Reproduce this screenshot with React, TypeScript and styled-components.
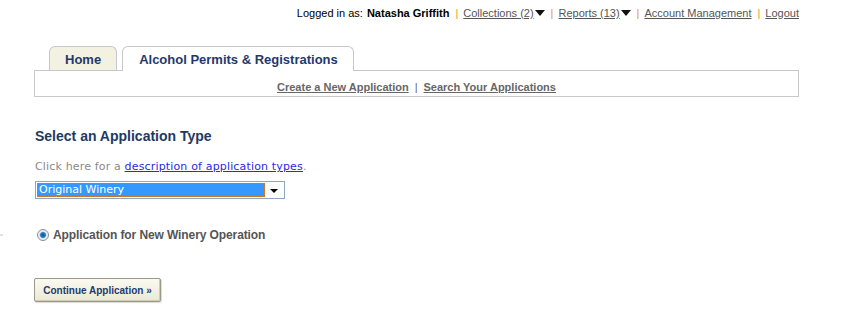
import styled, { createGlobalStyle } from "styled-components";

const GlobalStyle = createGlobalStyle`
  html, body {
    margin: 0;
    padding: 0;
    background: #fff;
    font-family: "Liberation Sans", Arial, sans-serif;
  }
`;

const Page = styled.div`
  width: 850px;
  height: 316px;
  overflow: hidden;
  box-sizing: border-box;
  padding: 0 51px 0 34px;
`;

const TopBar = styled.div`
  display: flex;
  justify-content: flex-end;
  align-items: center;
  height: 14px;
  padding-top: 6px;
  font-size: 11px;
  color: #000;
  white-space: nowrap;
`;

const UserName = styled.b`
  margin-left: 4px;
`;

const Pipe = styled.span`
  color: #e39a2b;
  margin: 0 5px 0 6px;
`;

const TopLink = styled.a`
  color: #555;
  text-decoration: underline;
`;

const Caret = styled.span`
  display: inline-block;
  width: 0;
  height: 0;
  border-left: 5px solid transparent;
  border-right: 5px solid transparent;
  border-top: 6px solid #111;
  margin-left: 1px;
  vertical-align: 2px;
`;

const TabList = styled.div`
  display: flex;
  align-items: flex-end;
  gap: 5px;
  padding-left: 15px;
  margin-top: 26px;
`;

const Tab = styled.div<{ $active?: boolean }>`
  box-sizing: border-box;
  height: ${p => (p.$active ? 25 : 24)}px;
  margin-bottom: ${p => (p.$active ? -1 : 0)}px;
  position: relative;
  z-index: ${p => (p.$active ? 1 : 0)};
  padding: ${p => (p.$active ? "4px 15px 0 16px" : "4px 15px 0 15px")};
  background: ${p => (p.$active ? "#fff" : "#f3f1e2")};
  border: 1px solid #c8c8c8;
  border-bottom: none;
  border-radius: 6px 6px 0 0;
  color: #1e3a6b;
  font-weight: bold;
  font-size: 13px;
  line-height: 17px;
`;

const SubNav = styled.div`
  box-sizing: border-box;
  height: 27px;
  border: 1px solid #c8c8c8;
  display: flex;
  justify-content: center;
  align-items: flex-end;
  padding-bottom: 3px;
  font-size: 11px;
  font-weight: bold;
  color: #666;
`;

const SubLink = styled.a`
  color: #666;
  text-decoration: underline;
`;

const SubPipe = styled.span`
  margin: 0 6px;
  font-weight: normal;
  color: #666;
`;

const Heading = styled.h2`
  margin: 31px 0 0 1px;
  font-size: 14px;
  line-height: 16px;
  color: #1e3a63;
`;

const Hint = styled.p`
  margin: 16px 0 0 1px;
  font-family: "DejaVu Sans", Verdana, sans-serif;
  font-size: 11px;
  letter-spacing: 0.16px;
  line-height: 14px;
  color: #8a8a8a;
`;

const HintLink = styled.a`
  color: #2a2ae0;
  text-decoration: underline;
`;

const FakeSelect = styled.div`
  box-sizing: border-box;
  width: 250px;
  height: 18px;
  margin: 7px 0 0 1px;
  border: 1px solid #8ea6c2;
  display: flex;
  align-items: center;
  padding: 1px;
  background: #fff;
`;

const SelectedValue = styled.div`
  box-sizing: border-box;
  flex: 1;
  height: 14px;
  background: #3399ff;
  outline: 1px dotted #d07a2a;
  outline-offset: -1px;
  color: #fff;
  font-family: "DejaVu Sans", Verdana, sans-serif;
  font-size: 11px;
  line-height: 14px;
  padding-left: 2px;
`;

const SelectArrow = styled.div`
  width: 18px;
  display: flex;
  justify-content: center;
  align-items: center;
  &::after {
    content: "";
    border-left: 4px solid transparent;
    border-right: 4px solid transparent;
    border-top: 4px solid #000;
    margin-top: 2px;
  }
`;

const RadioRow = styled.label`
  display: flex;
  align-items: center;
  gap: 4px;
  margin: 29px 0 0 3px;
  font-size: 12px;
  letter-spacing: -0.1px;
  font-weight: bold;
  color: #555;
  position: relative;
  &::before {
    content: "";
    position: absolute;
    left: -37px;
    top: 6px;
    width: 3px;
    height: 2px;
    background: #e2e2e2;
  }
`;

const Radio = styled.span`
  box-sizing: border-box;
  width: 12px;
  height: 12px;
  border-radius: 50%;
  border: 1px solid #8c8c8c;
  background: radial-gradient(circle at 50% 50%, #0d4f8f 0, #2f7fc4 2.5px, #d8e4ee 3.5px, #f4f4f4 5px);
  flex: none;
`;

const Button = styled.button`
  display: block;
  box-sizing: border-box;
  margin: 36px 0 0 0;
  width: 127px;
  height: 24px;
  border: 1px solid #9a9a8a;
  border-radius: 2px;
  background: linear-gradient(#fbfaf2, #ebe8d4);
  box-shadow: inset -1px -1px 0 #d0ccb4, 1px 1px 1px rgba(0, 0, 0, 0.15);
  color: #1e3a6b;
  font-family: "Liberation Sans", Arial, sans-serif;
  font-weight: bold;
  font-size: 10px;
  padding: 0;
`;

export default function App() {
  return (
    <Page>
      <GlobalStyle />
      <TopBar>
        Logged in as:<UserName>Natasha Griffith</UserName>
        <Pipe>|</Pipe>
        <TopLink>Collections (2)</TopLink>
        <Caret />
        <Pipe>|</Pipe>
        <TopLink>Reports (13)</TopLink>
        <Caret />
        <Pipe>|</Pipe>
        <TopLink>Account Management</TopLink>
        <Pipe>|</Pipe>
        <TopLink>Logout</TopLink>
      </TopBar>
      <TabList>
        <Tab>Home</Tab>
        <Tab $active>Alcohol Permits &amp; Registrations</Tab>
      </TabList>
      <SubNav>
        <SubLink>Create a New Application</SubLink>
        <SubPipe>|</SubPipe>
        <SubLink>Search Your Applications</SubLink>
      </SubNav>
      <Heading>Select an Application Type</Heading>
      <Hint>
        Click here for a <HintLink>description of application types</HintLink>.
      </Hint>
      <FakeSelect>
        <SelectedValue>Original Winery</SelectedValue>
        <SelectArrow />
      </FakeSelect>
      <RadioRow>
        <Radio />
        Application for New Winery Operation
      </RadioRow>
      <Button>Continue Application »</Button>
    </Page>
  );
}
